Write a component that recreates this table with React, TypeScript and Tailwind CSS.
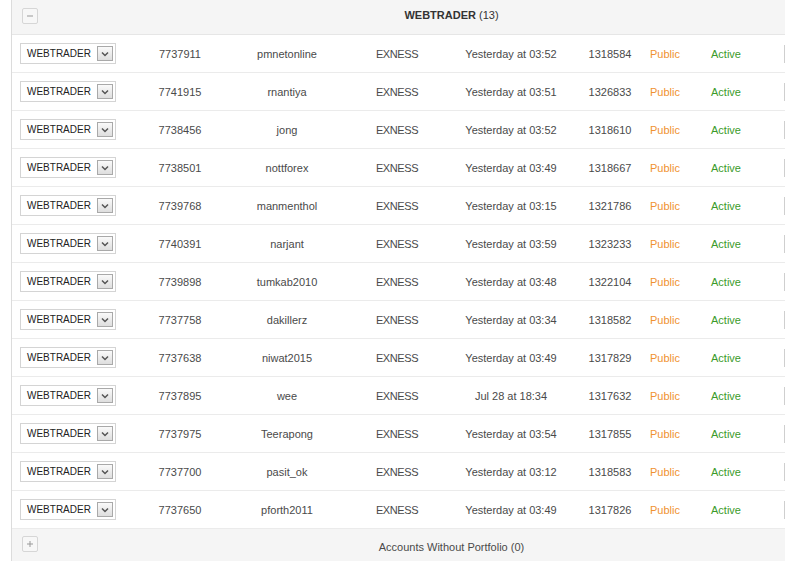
import React from 'react'

type Row = { id: string; user: string; broker: string; date: string; num: string }

const rows: Row[] = [
  { id: '7737911', user: 'pmnetonline', broker: 'EXNESS', date: 'Yesterday at 03:52', num: '1318584' },
  { id: '7741915', user: 'rnantiya', broker: 'EXNESS', date: 'Yesterday at 03:51', num: '1326833' },
  { id: '7738456', user: 'jong', broker: 'EXNESS', date: 'Yesterday at 03:52', num: '1318610' },
  { id: '7738501', user: 'nottforex', broker: 'EXNESS', date: 'Yesterday at 03:49', num: '1318667' },
  { id: '7739768', user: 'manmenthol', broker: 'EXNESS', date: 'Yesterday at 03:15', num: '1321786' },
  { id: '7740391', user: 'narjant', broker: 'EXNESS', date: 'Yesterday at 03:59', num: '1323233' },
  { id: '7739898', user: 'tumkab2010', broker: 'EXNESS', date: 'Yesterday at 03:48', num: '1322104' },
  { id: '7737758', user: 'dakillerz', broker: 'EXNESS', date: 'Yesterday at 03:34', num: '1318582' },
  { id: '7737638', user: 'niwat2015', broker: 'EXNESS', date: 'Yesterday at 03:49', num: '1317829' },
  { id: '7737895', user: 'wee', broker: 'EXNESS', date: 'Jul 28 at 18:34', num: '1317632' },
  { id: '7737975', user: 'Teerapong', broker: 'EXNESS', date: 'Yesterday at 03:54', num: '1317855' },
  { id: '7737700', user: 'pasit_ok', broker: 'EXNESS', date: 'Yesterday at 03:12', num: '1318583' },
  { id: '7737650', user: 'pforth2011', broker: 'EXNESS', date: 'Yesterday at 03:49', num: '1317826' },
]

const ToggleBox = ({ sign }: { sign: '-' | '+' }) => (
  <div className="w-4 h-4 rounded-[2px] border border-[#d6d6d6] bg-[#f7f7f7] flex items-center justify-center">
    <svg width="8" height="8" viewBox="0 0 8 8">
      <path d="M1 4h6" stroke="#999" strokeWidth="1" />
      {sign === '+' && <path d="M4 1v6" stroke="#999" strokeWidth="1" />}
    </svg>
  </div>
)

const PlatformSelect = () => (
  <div className="w-[96px] h-[21px] border border-[#d4d4d4] bg-white flex items-center justify-between pl-[6px] pr-[2px]">
    <span className="text-[10px] text-[#222] leading-none">WEBTRADER</span>
    <div className="w-[16px] h-[15px] border border-[#a9a9a9] bg-gradient-to-b from-[#fafafa] to-[#dedede] flex items-center justify-center">
      <svg width="8" height="6" viewBox="0 0 8 6">
        <path d="M1 1.5l3 3 3-3" fill="none" stroke="#555" strokeWidth="1.5" />
      </svg>
    </div>
  </div>
)

export default function App() {
  return (
    <div className="w-[785px] h-[561px] overflow-hidden bg-white" style={{ fontFamily: '"Liberation Sans", Arial, sans-serif' }}>
      <div className="ml-[11px] w-[880px] h-full border-l border-[#dcdcdc] flex flex-col text-[11px] text-[#4a4a4a]">
        <div className="h-[35px] shrink-0 bg-[#f5f5f5] border-b border-[#e6e6e6] flex items-center relative">
          <div className="pl-[10px] -mt-[3px]">
            <ToggleBox sign="-" />
          </div>
          <div className="flex-1 text-center -ml-[26px] -mt-[4px] text-[#333]">
            <span className="font-bold">WEBTRADER</span> (13)
          </div>
        </div>

        {rows.map((r) => (
          <div key={r.id + r.user} className="h-[38px] shrink-0 border-b border-[#ebebeb] flex items-center">
            <div className="w-[116px] pl-[8px]">
              <PlatformSelect />
            </div>
            <div className="flex items-center pt-[2px]">
              <div className="w-[104px] text-center">{r.id}</div>
              <div className="w-[110px] text-center">{r.user}</div>
              <div className="w-[110px] text-center tracking-[-0.4px]">{r.broker}</div>
              <div className="w-[118px] text-center">{r.date}</div>
              <div className="w-[80px] text-center">{r.num}</div>
              <div className="w-[61px] text-[#f0922f]">Public</div>
              <div className="w-[73px] text-[#3b9b2a]">Active</div>
            </div>
            <div className="w-px h-[18px] bg-[#cfcfcf]" />
          </div>
        ))}

        <div className="flex-1 bg-[#f5f5f5] flex items-start pt-[7px]">
          <div className="pl-[10px]">
            <ToggleBox sign="+" />
          </div>
          <div className="flex-1 text-center -ml-[26px] pt-[3px]">Accounts Without Portfolio (0)</div>
        </div>
      </div>
    </div>
  )
}
